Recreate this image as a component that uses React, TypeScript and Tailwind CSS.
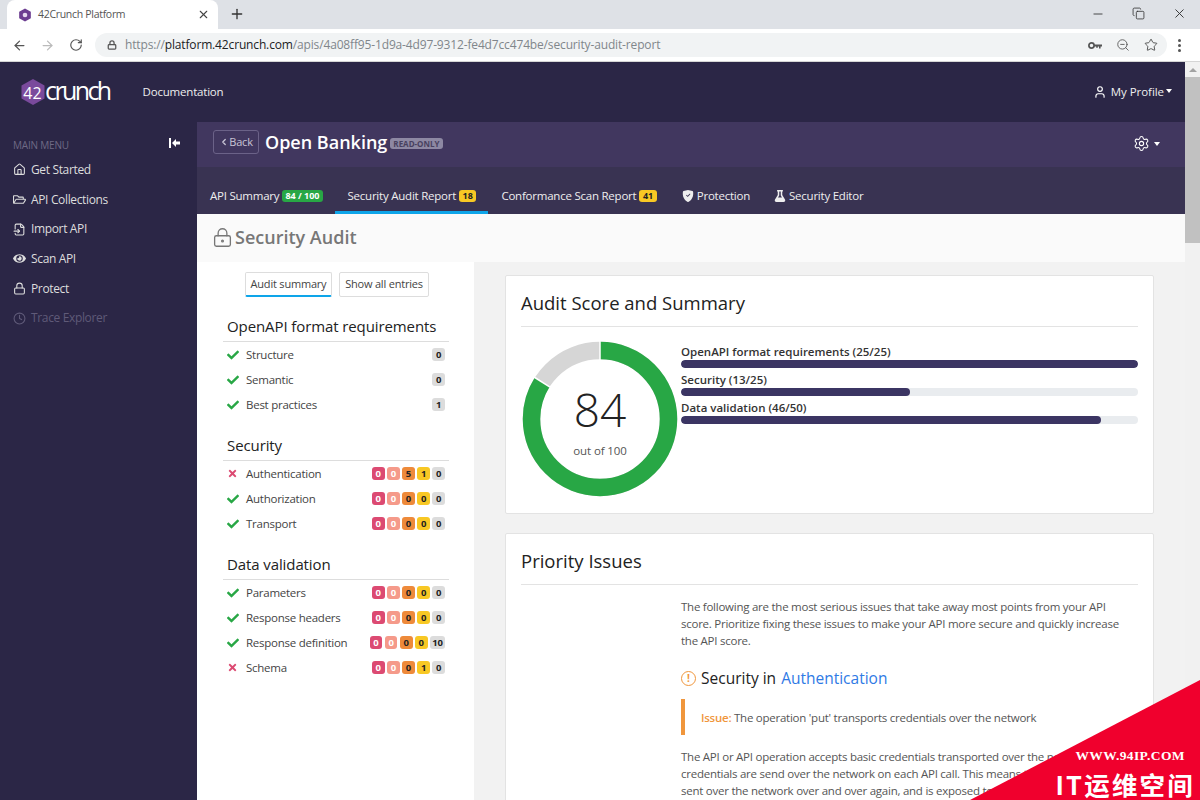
import { ArrowLeft, ArrowRight, RotateCw, Lock, ZoomOut, Star, X, Plus, Minus, Copy, User, Settings, Home, FileInput, LockKeyhole, ChevronLeft, Clock } from "lucide-react";
import { FaCheck, FaTimes, FaFlask, FaEye, FaRegFolderOpen } from "react-icons/fa";
import { BsShieldFillCheck } from "react-icons/bs";

const FONT = "font-['Open_Sans','Noto_Sans',sans-serif]";

const menu = [
  { label: "Get Started", icon: Home },
  { label: "API Collections", icon: FaRegFolderOpen },
  { label: "Import API", icon: FileInput },
  { label: "Scan API", icon: FaEye },
  { label: "Protect", icon: Lock },
];

const sections = [
  {
    title: "Security",
    rows: [
      { name: "Authentication", ok: false, counts: [0, 0, 5, 1, 0] },
      { name: "Authorization", ok: true, counts: [0, 0, 0, 0, 0] },
      { name: "Transport", ok: true, counts: [0, 0, 0, 0, 0] },
    ],
  },
  {
    title: "Data validation",
    rows: [
      { name: "Parameters", ok: true, counts: [0, 0, 0, 0, 0] },
      { name: "Response headers", ok: true, counts: [0, 0, 0, 0, 0] },
      { name: "Response definition", ok: true, counts: [0, 0, 0, 0, 10] },
      { name: "Schema", ok: false, counts: [0, 0, 0, 1, 0] },
    ],
  },
];

const badgeStyles = [
  "bg-[#dc4a72] text-white",
  "bg-[#f59a8a] text-white",
  "bg-[#ee8a3a] text-[#222]",
  "bg-[#f8c824] text-[#222]",
  "bg-[#dcdcdc] text-[#222]",
];

const bars = [
  { label: "OpenAPI format requirements (25/25)", pct: 100 },
  { label: "Security (13/25)", pct: 50 },
  { label: "Data validation (46/50)", pct: 92 },
];

function Badge({ value, className }: { value: number; className: string }) {
  return (
    <span className={`flex h-[13px] min-w-[12.6px] items-center justify-center rounded-[3px] px-[2px] text-[9.5px] leading-none font-bold ${className}`}>
      {value}
    </span>
  );
}

function Row({ name, ok, children }: { name: string; ok: boolean; children: React.ReactNode }) {
  return (
    <div className="flex h-[25px] items-center pr-[4px] pl-[4px] text-[11.5px] tracking-[-0.25px] text-[#444]">
      <span className="flex w-[19px] shrink-0">
        {ok ? (
          <FaCheck size={12} className="text-[#28a745]" />
        ) : (
          <FaTimes size={11} className="text-[#dc4a72]" />
        )}
      </span>
      <span className="flex-1">{name}</span>
      <span className="flex gap-[2.5px] tracking-normal">{children}</span>
    </div>
  );
}

function Donut() {
  return (
    <svg width="156" height="156" viewBox="0 0 156 156" className="shrink-0">
      <circle cx="78" cy="78" r="68.5" fill="none" stroke="#d6d6d6" strokeWidth="17.5" />
      <circle
        cx="78"
        cy="78"
        r="68.5"
        fill="none"
        stroke="#28a745"
        strokeWidth="17.5"
        pathLength="100"
        strokeDasharray="84 16"
        transform="rotate(-90 78 78)"
      />
      <line x1="78" y1="0" x2="78" y2="19" stroke="#fff" strokeWidth="1.5" />
      <line x1="12" y1="36" x2="28" y2="46.2" stroke="#fff" strokeWidth="1.5" />
    </svg>
  );
}

export default function App() {
  return (
    <div className={`relative flex h-[800px] w-[1200px] flex-col overflow-hidden bg-white ${FONT}`}>
      {/* browser tabs */}
      <div className="flex h-[29px] shrink-0 items-end bg-[#dee1e6] pl-[7px]">
        <div className="flex h-[29px] w-[211px] items-center rounded-t-lg bg-white pr-[8px] pl-[11px]">
          <svg width="14" height="14" viewBox="0 0 24 24">
            <path d="M12 1l10 5.5v11L12 23 2 17.5v-11z" fill="#6c3d91" />
            <circle cx="12" cy="12" r="4" fill="#e6d8ef" />
          </svg>
          <span className="ml-[6px] flex-1 text-[10.5px] tracking-[-0.3px] text-[#555]">42Crunch Platform</span>
          <X size={13} strokeWidth={2} className="text-[#444]" />
        </div>
        <div className="flex h-[29px] flex-1 items-center pb-[2px] pl-[11px]">
          <Plus size={16} strokeWidth={2} className="text-[#333]" />
          <div className="ml-auto flex items-center gap-[27px] pr-[13px] text-[#333]">
            <Minus size={14} strokeWidth={1.5} />
            <Copy size={13} strokeWidth={1.5} />
            <X size={15} strokeWidth={1.5} />
          </div>
        </div>
      </div>

      {/* browser toolbar */}
      <div className="flex h-[33px] shrink-0 items-center border-b border-[#d5d5d5] bg-white pl-[12px]">
        <ArrowLeft size={15} strokeWidth={2} className="text-[#555]" />
        <ArrowRight size={15} strokeWidth={2} className="ml-[13px] text-[#bbb]" />
        <RotateCw size={14} strokeWidth={2} className="ml-[14px] text-[#555]" />
        <div className="ml-[12px] flex h-[24px] w-[1072px] items-center rounded-full bg-[#f1f3f4] pr-[9px] pl-[12px]">
          <Lock size={10} strokeWidth={3} className="text-[#555]" />
          <span className="ml-[8px] flex-1 text-[12px] tracking-[-0.15px] text-[#80868b]">
            https://<span className="text-[#202124]">platform.42crunch.com</span>/apis/4a08ff95-1d9a-4d97-9312-fe4d7cc474be/security-audit-report
          </span>
          <svg width="14" height="9" viewBox="0 0 14 9" className="text-[#555]">
            <circle cx="3.5" cy="4.5" r="2.6" fill="none" stroke="currentColor" strokeWidth="1.7" />
            <path d="M6 3.6h8v1.8h-1.4v2h-1.6v-2h-1.2v1.4H8.2V5.4H6z" fill="currentColor" />
          </svg>
          <ZoomOut size={14} strokeWidth={1.5} className="ml-[14px] text-[#555]" />
          <Star size={14} strokeWidth={1.5} className="ml-[14px] text-[#444]" />
        </div>
        <div className="ml-[11px] flex flex-col gap-[2px]">
          <span className="h-[3px] w-[3px] rounded-full bg-[#555]" />
          <span className="h-[3px] w-[3px] rounded-full bg-[#555]" />
          <span className="h-[3px] w-[3px] rounded-full bg-[#555]" />
        </div>
      </div>

      <div className="flex min-h-0 flex-1">
        <div className="flex min-w-0 flex-1 flex-col">
          {/* top bar */}
          <header className="flex h-[60px] shrink-0 items-center bg-[#2b2646] pr-[13px] pl-[19px] text-white">
            <svg width="28" height="28" viewBox="0 0 27 28" className="shrink-0">
              <path d="M13.5 1l11.5 6.5v13L13.5 27 2 20.5v-13z" fill="#7a4a9c" />
              <text x="13" y="20.5" textAnchor="middle" fontSize="16" fontFamily="Open Sans" fill="#fff">42</text>
            </svg>
            <span className="mb-[3px] ml-[-2px] text-[25px] leading-none font-medium tracking-[-2.6px]">crunch</span>
            <span className="ml-[33px] text-[11.5px] tracking-[-0.2px] text-[#eee]">Documentation</span>
            <User size={14} strokeWidth={2} className="ml-auto" />
            <span className="ml-[4px] text-[11.5px] tracking-[-0.05px] text-[#eee]">My Profile</span>
            <span className="mb-[2px] ml-[2px] border-x-[3.5px] border-t-[4px] border-x-transparent border-t-white" />
          </header>

          <div className="flex min-h-0 flex-1">
            {/* sidebar */}
            <aside className="w-[197px] shrink-0 bg-[#2b2646] text-[#ddd]">
              <div className="flex h-[33px] items-start justify-between pt-[17px] pr-[17px] pl-[13px]">
                <span className="text-[10px] leading-[12px] tracking-[-0.2px] text-[#6f6a85]">MAIN MENU</span>
                <svg width="11" height="10" viewBox="0 0 11 10" className="mt-[-1px]" fill="#fff">
                  <rect x="0" y="0" width="2" height="10" />
                  <path d="M3 5l4-4v2.5h4v3H7V9z" />
                </svg>
              </div>
              <nav className="flex flex-col">
                {menu.map(({ label, icon: Icon }) => (
                  <div key={label} className="flex h-[29.7px] items-center pl-[13px] text-[12px] tracking-[-0.35px]">
                    <Icon size={13} />
                    <span className="ml-[5px]">{label}</span>
                  </div>
                ))}
                <div className="flex h-[29.7px] items-center pl-[13px] text-[12px] tracking-[-0.35px] text-[#5f5a78]">
                  <Clock size={13} />
                  <span className="ml-[5px]">Trace Explorer</span>
                </div>
              </nav>
            </aside>

            <main className="flex min-w-0 flex-1 flex-col">
              {/* title band */}
              <div className="flex h-[45px] shrink-0 items-center bg-[#41375f] pr-[25px] pb-[5px] pl-[16px]">
                <span className="flex h-[24px] w-[46px] items-center justify-center rounded-[3px] border border-[#6b6288] text-[11px] tracking-[-0.2px] text-[#c9c5d6]">
                  <ChevronLeft size={10} strokeWidth={3} />
                  Back
                </span>
                <span className="ml-[6px] text-[18px] font-semibold text-white">Open Banking</span>
                <span className="mt-[2px] ml-[3px] rounded-[3px] bg-[#8d88a3] px-[3px] py-[1px] text-[8px] leading-[9px] font-bold text-[#48415f]">READ-ONLY</span>
                <Settings size={17} strokeWidth={1.5} className="mt-[3px] ml-auto text-white" />
                <span className="mt-[3px] ml-[4px] border-x-[3.5px] border-t-[4px] border-x-transparent border-t-white" />
              </div>

              {/* tabs */}
              <div className="flex h-[47px] shrink-0 items-stretch bg-[#393352] pl-[13px] text-[11.5px] tracking-[-0.23px] text-[#eee]">
                <div className="flex items-center pt-[11px]">
                  API Summary
                  <span className="ml-[3px] rounded-[3px] bg-[#28a745] px-[3px] py-[1px] text-[9px] leading-[10px] font-bold tracking-normal text-white">84 / 100</span>
                </div>
                <div className="ml-[12px] flex items-center border-b-[3px] border-[#0ea5e9] pt-[14px] pr-[12px] pl-[13px]">
                  Security Audit Report
                  <span className="ml-[3px] rounded-[3px] bg-[#f8c824] px-[3.5px] py-[1px] text-[9px] leading-[10px] font-bold tracking-normal text-[#222]">18</span>
                </div>
                <div className="ml-[13px] flex items-center pt-[11px]">
                  Conformance Scan Report
                  <span className="ml-[3px] rounded-[3px] bg-[#f8c824] px-[3.5px] py-[1px] text-[9px] leading-[10px] font-bold tracking-normal text-[#222]">41</span>
                </div>
                <div className="ml-[25px] flex items-center pt-[11px]">
                  <BsShieldFillCheck size={12} className="mr-[3px]" />
                  Protection
                </div>
                <div className="ml-[24px] flex items-center pt-[11px]">
                  <FaFlask size={12} className="mr-[3px]" />
                  Security Editor
                </div>
              </div>

              {/* page heading */}
              <div className="flex h-[48px] shrink-0 items-center bg-[#fafafa] pb-[2px] pl-[15px] text-[#777]">
                <LockKeyhole size={21} strokeWidth={1.5} />
                <span className="ml-[2px] text-[18px] font-semibold">Security Audit</span>
              </div>

              <div className="flex min-h-0 flex-1">
                {/* audit nav */}
                <div className="w-[277px] shrink-0 bg-white pr-[25px] pl-[26px]">
                  <div className="flex gap-[7px] pt-[10px] pl-[22px] text-[11px] tracking-[-0.2px] text-[#444]">
                    <span className="flex h-[25px] w-[87px] items-center justify-center rounded-[2px] border border-b-2 border-[#ddd] border-b-[#0ea5e9]">Audit summary</span>
                    <span className="flex h-[25px] w-[90px] items-center justify-center rounded-[2px] border border-[#ddd]">Show all entries</span>
                  </div>

                  <h3 className="mt-[19px] flex h-[25px] items-center pb-[4px] pl-[4px] text-[15px] tracking-[-0.1px] text-[#222]">OpenAPI format requirements</h3>
                  <div className="border-t border-[#ddd]">
                    <Row name="Structure" ok><Badge value={0} className={badgeStyles[4]} /></Row>
                    <Row name="Semantic" ok><Badge value={0} className={badgeStyles[4]} /></Row>
                    <Row name="Best practices" ok><Badge value={1} className={badgeStyles[4]} /></Row>
                  </div>

                  {sections.map((s) => (
                    <div key={s.title}>
                      <h3 className="mt-[18px] flex h-[25px] items-center pb-[4px] pl-[4px] text-[15px] tracking-[-0.1px] text-[#222]">{s.title}</h3>
                      <div className="border-t border-[#ddd]">
                        {s.rows.map((r) => (
                          <Row key={r.name} name={r.name} ok={r.ok}>
                            {r.counts.map((c, i) => (
                              <Badge key={i} value={c} className={badgeStyles[i]} />
                            ))}
                          </Row>
                        ))}
                      </div>
                    </div>
                  ))}
                </div>

                {/* report */}
                <div className="min-w-0 flex-1 bg-[#f2f2f2] pt-[13px] pr-[31px] pl-[31px]">
                  <section className="h-[239px] rounded-[2px] border border-[#e3e3e3] bg-white px-[15px]">
                    <h2 className="flex h-[51px] items-center border-b border-[#e3e3e3] pt-[4px] text-[18.5px] font-medium text-[#222]">Audit Score and Summary</h2>
                    <div className="flex pt-[14px] pl-[1px]">
                      <div className="relative">
                        <Donut />
                        <div className="absolute inset-0 flex flex-col items-center text-[#222]">
                          <span className="mt-[37px] text-[46px] leading-[62px] font-light">84</span>
                          <span className="mt-[2px] text-[11.5px] tracking-[-0.1px] text-[#555]">out of 100</span>
                        </div>
                      </div>
                      <div className="ml-[3px] flex-1 pt-[3px]">
                        {bars.map((b) => (
                          <div key={b.label} className="h-[28px]">
                            <div className="h-[16px] text-[11.5px] leading-[16px] font-semibold text-[#333]">{b.label}</div>
                            <div className="h-[8px] overflow-hidden rounded-full bg-[#e9ecef]">
                              <div className="h-full rounded-full bg-[#3b3563]" style={{ width: `${b.pct}%` }} />
                            </div>
                          </div>
                        ))}
                      </div>
                    </div>
                  </section>

                  <section className="mt-[19px] h-[400px] rounded-[2px] border border-[#e3e3e3] bg-white px-[15px]">
                    <h2 className="flex h-[51px] items-center border-b border-[#e3e3e3] pt-[4px] text-[18.5px] font-medium text-[#222]">Priority Issues</h2>
                    <div className="pt-[13px] pl-[160px] text-[11.5px] leading-[17px] tracking-[-0.25px] text-[#555]">
                      <p>The following are the most serious issues that take away most points from your API score. Prioritize fixing these issues to make your API more secure and quickly increase the API score.</p>
                      <h3 className="mt-[15px] flex h-[28px] items-center text-[15.5px] tracking-normal text-[#222]">
                        <span className="mr-[5px] flex h-[15px] w-[15px] items-center justify-center rounded-full border-[1.5px] border-[#f0963c] text-[10px] font-bold text-[#f0963c]">!</span>
                        Security in<span className="ml-[5px] text-[#2f7ae5]">Authentication</span>
                      </h3>
                      <div className="mt-[7px] flex h-[36px] items-center border-l-[4px] border-[#f0963c] pl-[16px]">
                        <span><b className="font-semibold text-[#f0963c]">Issue:</b> The operation 'put' transports credentials over the network</span>
                      </div>
                      <p className="mt-[13px]">The API or API operation accepts basic credentials transported over the network. The credentials are send over the network on each API call. This means the credentials are sent over the network over and over again, and is exposed to attackers.</p>
                    </div>
                  </section>
                </div>
              </div>
            </main>
          </div>
        </div>

        {/* page scrollbar */}
        <div className="flex w-[15px] shrink-0 flex-col bg-[#f1f1f1]">
          <div className="flex h-[15px] items-center justify-center">
            <span className="border-x-[4px] border-b-[4px] border-x-transparent border-b-[#a3a3a3]" />
          </div>
          <div className="h-[166px] bg-[#c1c1c1]" />
        </div>
      </div>

      {/* watermark */}
      <div className="absolute right-0 bottom-0 h-[120px] w-[230px] bg-[#f0002d] [clip-path:polygon(100%_0,100%_100%,0_100%)]" />
      <div className="absolute right-[15px] bottom-[38px] font-['Liberation_Serif',serif] text-[13.5px] leading-[13px] font-bold tracking-[0.4px] text-white">WWW.94IP.COM</div>
      <div className="absolute right-[5px] bottom-[2px] font-['Noto_Sans_CJK_SC',sans-serif] text-[25.5px] leading-[28px] font-bold tracking-[2.2px] text-white">IT运维空间</div>
    </div>
  );
}
